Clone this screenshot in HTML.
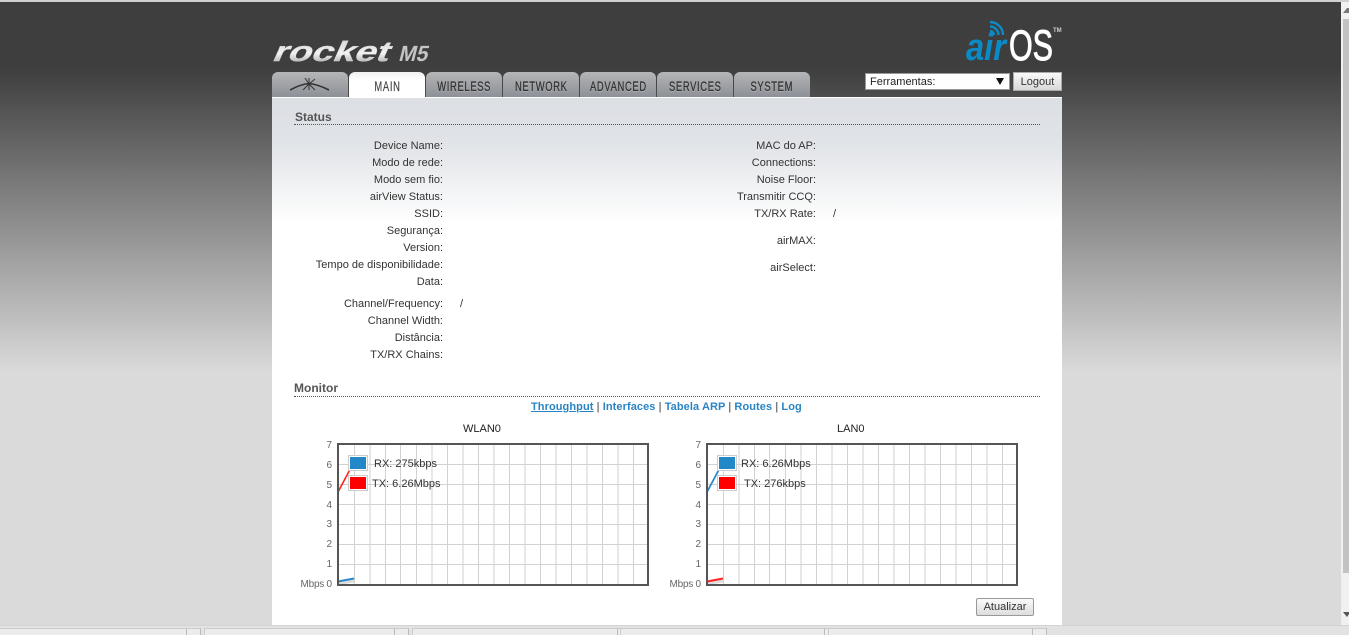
<!DOCTYPE html>
<html><head><meta charset="utf-8"><style>
*{box-sizing:border-box}
html,body{margin:0;padding:0;width:1349px;height:635px;overflow:hidden}
body{position:relative;font:11px/17px "Liberation Sans",Arial,sans-serif;color:#333;background:#dadada}
.a{position:absolute;white-space:nowrap}
#bg{left:0;top:2px;width:1341px;height:623px;background:linear-gradient(#3e3e3e 0,#3e3e3e 66px,#dadada 370px,#dadada 100%)}
#panel{left:272px;top:97px;width:790px;height:528px;border-top:1px solid #fff;background:linear-gradient(#dcdfe4 0,#e0e3e7 45px,#fff 125px,#fff 100%)}
.tab{position:absolute;top:72px;width:76px;height:25px;border-radius:6px 6px 0 0;background:linear-gradient(#b5b6b8 0,#a4a6a9 40%,#8d9197 100%);color:#333;text-align:center;font-size:14px;line-height:28px}
.tab span{display:inline-block;transform:scaleX(.67);letter-spacing:1px;-webkit-text-stroke:.3px #333;text-shadow:0 1px 0 #b9bbbe;margin:0 -20px}
.tab.on{background:linear-gradient(#f0f0f0 0,#fff 35%,#fff 100%);height:26px;color:#444}
.tab.on span{text-shadow:none;-webkit-text-stroke:.2px #444}
.h{font-size:12px;font-weight:bold;color:#555;border-bottom:1px dotted #555}
.l{text-align:right;width:200px;color:#333;margin-top:1px}
.leg{font-size:11px;color:#333;line-height:14px}
.tick{font-size:10px;color:#666;text-align:right;line-height:12px;margin-top:1px}
</style></head><body>
<div class="a" style="left:0;top:0;width:1349px;height:2px;background:#d0d0d0"></div>
<div class="a" id="bg"></div>

<svg class="a" style="left:270px;top:30px" width="165" height="40">
<defs><linearGradient id="sil" x1="0" y1="0" x2="0" y2="1"><stop offset="0" stop-color="#cfcfcf"/><stop offset=".55" stop-color="#f2f2f2"/><stop offset="1" stop-color="#8f8f8f"/></linearGradient></defs>
<g transform="translate(0 31) skewX(-24)"><text x="1" y="0" font-family="Liberation Sans" font-size="28" font-weight="bold" fill="url(#sil)" stroke="#ddd" stroke-width=".4" textLength="116" lengthAdjust="spacingAndGlyphs">rocket</text></g>
<g transform="translate(128 31) skewX(-14)"><text x="0" y="0" font-family="Liberation Sans" font-size="22" font-weight="bold" fill="#c4c4c4" textLength="29" lengthAdjust="spacingAndGlyphs">M5</text></g>
</svg>

<svg class="a" style="left:960px;top:18px" width="110" height="50">
<text x="6" y="42" font-family="Liberation Sans" font-size="38" font-weight="bold" font-style="italic" fill="#0b8bc6" textLength="40" lengthAdjust="spacingAndGlyphs">air</text>
<text x="49" y="42" font-family="Liberation Sans" font-size="43" fill="#fff" stroke="#fff" stroke-width="1" textLength="44" lengthAdjust="spacingAndGlyphs">OS</text>
<text x="93" y="14" font-family="Liberation Sans" font-size="6" font-weight="bold" fill="#ccc">TM</text>
<g fill="none" stroke="#0b8bc6" stroke-width="2.4"><path d="M30 13a4 4 0 0 1 4 4"/><path d="M30 8.500a8.500 8.500 0 0 1 8.500 8.500"/><path d="M30 4a13 13 0 0 1 13 13"/></g>
</svg>

<div class="tab" style="left:272px"><svg width="40" height="14" style="position:absolute;left:18px;top:6px"><g fill="none" stroke="#333"><path d="M0 12Q10 6.500 19 5.500Q28 6.500 39 12" stroke-width="1.600"/><path d="M19 6L15 0M19 6L19 0M19 6L25 1M19 6L13 12M19 6L25 12M19 6L19 12" stroke-width="1"/></g></svg></div>
<div class="tab on" style="left:349px"><span>MAIN</span></div>
<div class="tab" style="left:426px"><span>WIRELESS</span></div>
<div class="tab" style="left:503px"><span>NETWORK</span></div>
<div class="tab" style="left:580px"><span>ADVANCED</span></div>
<div class="tab" style="left:657px"><span>SERVICES</span></div>
<div class="tab" style="left:734px"><span>SYSTEM</span></div>

<div class="a" style="left:865px;top:73px;width:145px;height:17px;background:#fff;border:1px solid #999;line-height:17px;padding-left:4px;font-size:11px;color:#222">Ferramentas:<svg style="position:absolute;left:130px;top:4px" width="9" height="7"><path d="M0 0H8L4 7Z" fill="#111"/></svg></div>
<div class="a" style="left:1013px;top:72px;width:49px;height:19px;background:linear-gradient(#fafafa,#d8d8d8);border:1px solid #aaa;text-align:center;line-height:18px;font-size:11px;color:#333">Logout</div>

<div class="a" id="panel"></div>

<div class="a h" style="left:294px;top:109px;width:746px;height:16px;line-height:16px;padding-left:1px">Status</div>

<div class="a l" style="left:243px;top:137px">Device Name:</div>
<div class="a l" style="left:243px;top:154px">Modo de rede:</div>
<div class="a l" style="left:243px;top:171px">Modo sem fio:</div>
<div class="a l" style="left:243px;top:188px">airView Status:</div>
<div class="a l" style="left:243px;top:205px">SSID:</div>
<div class="a l" style="left:243px;top:222px">Segurança:</div>
<div class="a l" style="left:243px;top:239px">Version:</div>
<div class="a l" style="left:243px;top:256px">Tempo de disponibilidade:</div>
<div class="a l" style="left:243px;top:273px">Data:</div>
<div class="a l" style="left:243px;top:295px">Channel/Frequency:</div>
<div class="a" style="left:460px;top:296px">/</div>
<div class="a l" style="left:243px;top:312px">Channel Width:</div>
<div class="a l" style="left:243px;top:329px">Distância:</div>
<div class="a l" style="left:243px;top:346px">TX/RX Chains:</div>

<div class="a l" style="left:616px;top:137px">MAC do AP:</div>
<div class="a l" style="left:616px;top:154px">Connections:</div>
<div class="a l" style="left:616px;top:171px">Noise Floor:</div>
<div class="a l" style="left:616px;top:188px">Transmitir CCQ:</div>
<div class="a l" style="left:616px;top:205px">TX/RX Rate:</div>
<div class="a" style="left:833px;top:206px">/</div>
<div class="a l" style="left:616px;top:232px">airMAX:</div>
<div class="a l" style="left:616px;top:259px">airSelect:</div>

<div class="a h" style="left:294px;top:380px;width:746px;height:17px;line-height:16px">Monitor</div>

<div class="a" style="left:531px;top:400px;font-weight:bold;font-size:11px;line-height:14px;letter-spacing:.08px;color:#2a84c4"><span style="text-decoration:underline">Throughput</span> <span style="color:#333;font-weight:normal">|</span> Interfaces <span style="color:#333;font-weight:normal">|</span> Tabela ARP <span style="color:#333;font-weight:normal">|</span> Routes <span style="color:#333;font-weight:normal">|</span> Log</div>

<div class="a" style="left:463px;top:422px;font-size:11px;line-height:14px;color:#222">WLAN0</div>
<div class="a" style="left:837px;top:422px;font-size:11px;line-height:14px;color:#222">LAN0</div>

<svg class="a" style="left:337px;top:443px" width="312" height="143" shape-rendering="crispEdges">
<g stroke="#d2d2d2" fill="none">
<path d="M17.5 0V143M33 0V143M48.5 0V143M63.5 0V143M79.5 0V143M95 0V143M110.5 0V143M126 0V143M141.5 0V143M157 0V143M172.5 0V143M188 0V143M203.5 0V143M219 0V143M234.5 0V143M250 0V143M265.5 0V143M281 0V143M296.5 0V143"/>
<path d="M0 21.5H312M0 41.500H312M0 61.500H312M0 81.500H312M0 101.500H312M0 121.500H312"/></g>
<g shape-rendering="auto" fill="none"><path d="M1 49L17 19" stroke="#f22" stroke-width="1.600"/><path d="M1 140.500L17 138" stroke="#ddd" stroke-width="3"/><path d="M1 138.500L17 135.500" stroke="#2a88c8" stroke-width="2"/></g>
<rect x="1" y="1" width="310" height="141" fill="none" stroke="#555" stroke-width="2"/>
</svg>
<svg class="a" style="left:706px;top:443px" width="312" height="143" shape-rendering="crispEdges">
<g stroke="#d2d2d2" fill="none">
<path d="M17.5 0V143M33 0V143M48.5 0V143M63.5 0V143M79.5 0V143M95 0V143M110.5 0V143M126 0V143M141.5 0V143M157 0V143M172.5 0V143M188 0V143M203.5 0V143M219 0V143M234.5 0V143M250 0V143M265.5 0V143M281 0V143M296.5 0V143"/>
<path d="M0 21.5H312M0 41.500H312M0 61.500H312M0 81.500H312M0 101.500H312M0 121.500H312"/></g>
<g shape-rendering="auto" fill="none"><path d="M1 49L17 19" stroke="#2a88c8" stroke-width="1.800"/><path d="M1 140.500L17 138" stroke="#ddd" stroke-width="3"/><path d="M1 138.500L17 135.500" stroke="#f22" stroke-width="2"/></g>
<rect x="1" y="1" width="310" height="141" fill="none" stroke="#555" stroke-width="2"/>
</svg>

<div class="a" style="left:349px;top:456px;width:18px;height:14px;background:#2288c8;border:1px solid #fff;outline:1px solid #ccc"></div>
<div class="a" style="left:349px;top:476px;width:18px;height:14px;background:#f00;border:1px solid #fff;outline:1px solid #ccc"></div>
<div class="a leg" style="left:374px;top:457px">RX: 275kbps</div>
<div class="a leg" style="left:372px;top:477px">TX: 6.26Mbps</div>
<div class="a" style="left:718px;top:456px;width:18px;height:14px;background:#2288c8;border:1px solid #fff;outline:1px solid #ccc"></div>
<div class="a" style="left:718px;top:476px;width:18px;height:14px;background:#f00;border:1px solid #fff;outline:1px solid #ccc"></div>
<div class="a leg" style="left:741px;top:457px">RX: 6.26Mbps</div>
<div class="a leg" style="left:744px;top:477px">TX: 276kbps</div>

<div class="a tick" style="left:320px;top:439px;width:12px">7</div>
<div class="a tick" style="left:320px;top:459px;width:12px">6</div>
<div class="a tick" style="left:320px;top:479px;width:12px">5</div>
<div class="a tick" style="left:320px;top:499px;width:12px">4</div>
<div class="a tick" style="left:320px;top:518px;width:12px">3</div>
<div class="a tick" style="left:320px;top:538px;width:12px">2</div>
<div class="a tick" style="left:320px;top:558px;width:12px">1</div>
<div class="a tick" style="left:320px;top:578px;width:12px">0</div>
<div class="a tick" style="left:284px;top:578px;width:40px;letter-spacing:-.25px">Mbps</div>
<div class="a tick" style="left:689px;top:439px;width:12px">7</div>
<div class="a tick" style="left:689px;top:459px;width:12px">6</div>
<div class="a tick" style="left:689px;top:479px;width:12px">5</div>
<div class="a tick" style="left:689px;top:499px;width:12px">4</div>
<div class="a tick" style="left:689px;top:518px;width:12px">3</div>
<div class="a tick" style="left:689px;top:538px;width:12px">2</div>
<div class="a tick" style="left:689px;top:558px;width:12px">1</div>
<div class="a tick" style="left:689px;top:578px;width:12px">0</div>
<div class="a tick" style="left:653px;top:578px;width:40px;letter-spacing:-.25px">Mbps</div>

<div class="a" style="left:976px;top:598px;width:58px;height:18px;background:linear-gradient(#fafafa,#ddd);border:1px solid #999;border-radius:2px;text-align:center;font-size:11px;line-height:17px;color:#333">Atualizar</div>

<div class="a" style="left:1341px;top:2px;width:8px;height:623px;background:#f0f0f0"></div>
<div class="a" style="left:1343px;top:19px;width:6px;height:554px;background:#c2c2c2"></div>
<svg class="a" style="left:1343px;top:8px" width="6" height="5"><path d="M0 5L4 0 6 0V5Z" fill="#777"/></svg>
<svg class="a" style="left:1343px;top:612px" width="6" height="5"><path d="M0 0H6V2L4 5Z" fill="#555"/></svg>

<div class="a" style="left:0;top:625px;width:1349px;height:10px;background:#e2e2e2;border-top:1px solid #d4d4d4"></div>
<div class="a" style="left:0;top:628px;width:187px;height:7px;background:#ececec;border-top:1px solid #ccc;border-right:1px solid #bbb"></div>
<div class="a" style="left:187px;top:628px;width:14px;height:7px;background:#ececec;border-top:1px solid #ccc;border-right:1px solid #bbb"></div>
<div class="a" style="left:204px;top:628px;width:191px;height:7px;background:#ececec;border:1px solid #ccc;border-bottom:0;border-right-color:#bbb"></div>
<div class="a" style="left:395px;top:628px;width:14px;height:7px;background:#ececec;border-top:1px solid #ccc;border-right:1px solid #bbb"></div>
<div class="a" style="left:412px;top:628px;width:206px;height:7px;background:#ececec;border:1px solid #ccc;border-bottom:0;border-right-color:#bbb"></div>
<div class="a" style="left:618px;top:628px;width:14px;height:7px;background:#ececec;border-top:1px solid #ccc;border-right:1px solid #bbb"></div>
<div class="a" style="left:620px;top:628px;width:205px;height:7px;background:#ececec;border:1px solid #ccc;border-bottom:0;border-right-color:#bbb"></div>
<div class="a" style="left:825px;top:628px;width:14px;height:7px;background:#ececec;border-top:1px solid #ccc;border-right:1px solid #bbb"></div>
<div class="a" style="left:828px;top:628px;width:205px;height:7px;background:#ececec;border:1px solid #ccc;border-bottom:0;border-right-color:#bbb"></div>
<div class="a" style="left:1033px;top:628px;width:14px;height:7px;background:#ececec;border-top:1px solid #ccc;border-right:1px solid #bbb"></div>
</body></html>
